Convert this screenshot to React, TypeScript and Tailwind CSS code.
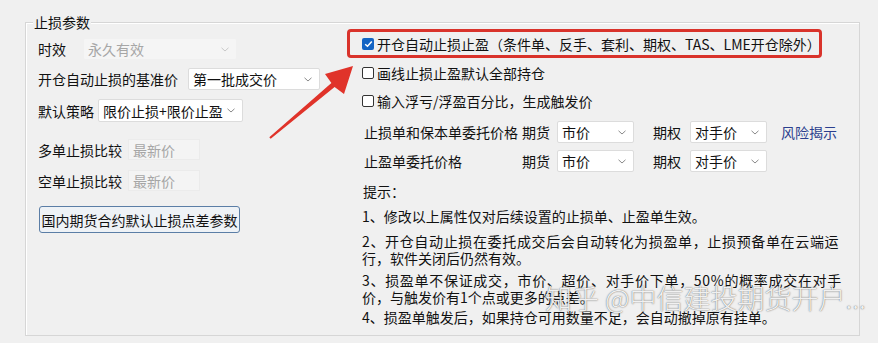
import React from "react";

function Chevron({ color = "#8a8a8a" }: { color?: string }) {
  return (
    <svg width="8" height="5" viewBox="0 0 8 5" className="shrink-0">
      <polyline points="0.5,0.8 4,4 7.5,0.8" fill="none" stroke={color} strokeWidth="1" />
    </svg>
  );
}

function Select({
  w,
  text,
  disabled,
  h = "h-[22px]",
}: {
  w: string;
  text: string;
  disabled?: boolean;
  h?: string;
}) {
  return (
    <div
      className={`${w} ${h} flex items-center justify-between pl-[4px] pr-[7px] rounded-[2px] border ${
        disabled ? "bg-[#f5f5f5] border-[#f0f0f0] text-[#a6a6a6]" : "bg-white border-[#dcdcdc] text-[#111]"
      }`}
    >
      <span className="whitespace-nowrap">{text}</span>
      <Chevron color={disabled ? "#c8c8c8" : "#8a8a8a"} />
    </div>
  );
}

function Box({ checked }: { checked?: boolean }) {
  if (checked) {
    return (
      <div className="w-[12px] h-[12px] rounded-[2px] bg-[#1364c4] flex items-center justify-center shrink-0">
        <svg width="9" height="8" viewBox="0 0 9 8">
          <polyline points="1.2,4.2 3.5,6.3 7.8,1.5" fill="none" stroke="#fff" strokeWidth="1.5" />
        </svg>
      </div>
    );
  }
  return <div className="w-[12px] h-[12px] rounded-[2px] bg-white border border-[#333] shrink-0" />;
}

export default function App() {
  return (
    <div className="relative w-[878px] h-[343px] overflow-hidden bg-[#f0f0f0] text-[14px] leading-[20px] text-[#111] font-['Noto_Sans_CJK_SC','Noto_Sans',sans-serif]">
      <div className="pt-[22px] pl-[25px]">
        <div className="relative w-[835px] h-[314px] border border-[#d6d6d6] shadow-[inset_1px_1px_0_#ffffff]">
          <div className="absolute left-[7px] top-[-11px] px-[1px] bg-[#f0f0f0] leading-[20px]">止损参数</div>
          <div className="flex items-start">
            {/* left column */}
            <div className="w-[321px] shrink-0 pl-[12px] flex flex-col">
              <div className="mt-[15px] h-[22px] flex items-center">
                <span className="w-[45px]">时效</span>
                <Select w="w-[154px]" text="永久有效" disabled />
              </div>
              <div className="mt-[8px] h-[22px] flex items-center">
                <span className="w-[150px] whitespace-nowrap">开仓自动止损的基准价</span>
                <Select w="w-[132px]" text="第一批成交价" />
              </div>
              <div className="mt-[9px] h-[23px] flex items-center">
                <span className="w-[60px] whitespace-nowrap">默认策略</span>
                <Select w="w-[145px]" h="h-[23px]" text="限价止损+限价止盈" />
              </div>
              <div className="mt-[17px] h-[21px] flex items-center">
                <span className="w-[90px] whitespace-nowrap">多单止损比较</span>
                <div className="w-[72px] h-[21px] pl-[4px] flex items-center bg-[#f4f4f4] border border-[#ebebeb] text-[#a6a6a6]">
                  最新价
                </div>
              </div>
              <div className="mt-[10px] h-[21px] flex items-center">
                <span className="w-[90px] whitespace-nowrap">空单止损比较</span>
                <div className="w-[72px] h-[21px] pl-[4px] flex items-center bg-[#f4f4f4] border border-[#ebebeb] text-[#a6a6a6]">
                  最新价
                </div>
              </div>
              <div className="mt-[15px] ml-[1px] w-[201px] h-[27px] flex items-center justify-center rounded-[3px] border border-[#5b7ea6] bg-[#eef2f6] whitespace-nowrap">
                国内期货合约默认止损点差参数
              </div>
            </div>

            {/* right column */}
            <div className="flex flex-col">
              <div className="mt-[6px] w-[475px] h-[29px] border-[3px] border-[#d9332b] rounded-[4px] flex items-center pl-[12px] gap-[3px]">
                <Box checked />
                <span className="whitespace-nowrap">开仓自动止损止盈（条件单、反手、套利、期权、TAS、LME开仓除外）</span>
              </div>
              <div className="mt-[5px] h-[20px] pl-[15px] flex items-center gap-[3px]">
                <Box />
                <span>画线止损止盈默认全部持仓</span>
              </div>
              <div className="mt-[8px] h-[20px] pl-[15px] flex items-center gap-[3px]">
                <Box />
                <span>输入浮亏/浮盈百分比，生成触发价</span>
              </div>
              <div className="mt-[10px] h-[22px] pl-[17px] flex items-center">
                <span className="w-[158px] whitespace-nowrap">止损单和保本单委托价格</span>
                <span className="w-[35px]">期货</span>
                <Select w="w-[77px]" text="市价" />
                <span className="ml-[19px] w-[37px]">期权</span>
                <Select w="w-[77px]" text="对手价" />
                <span className="ml-[14px] text-[#2b3f8e]">风险揭示</span>
              </div>
              <div className="mt-[7px] h-[22px] pl-[17px] flex items-center">
                <span className="w-[158px] whitespace-nowrap">止盈单委托价格</span>
                <span className="w-[35px]">期货</span>
                <Select w="w-[77px]" text="市价" />
                <span className="ml-[19px] w-[37px]">期权</span>
                <Select w="w-[77px]" text="对手价" />
              </div>
              <div className="mt-[9px] pl-[16px] leading-[20px]">提示：</div>
              <div className="pl-[15px] leading-[17px] whitespace-nowrap flex flex-col">
                <div className="mt-[7px]">1、修改以上属性仅对后续设置的止损单、止盈单生效。</div>
                <div className="mt-[8px]">
                  <span className="tracking-[0.65px]">2、开仓自动止损在委托成交后会自动转化为损盈单，止损预备单在云端运</span>
                  <br />
                  行，软件关闭后仍然有效。
                </div>
                <div className="mt-[5px]">
                  <span className="tracking-[0.7px]">3、损盈单不保证成交，市价、超价、对手价下单，50%的概率成交在对手</span>
                  <br />
                  价，与触发价有1个点或更多的点差。
                </div>
                <div className="mt-[3px]">4、损盈单触发后，如果持仓可用数量不足，会自动撤掉原有挂单。</div>
              </div>
            </div>
          </div>
        </div>
      </div>

      {/* red arrow overlay */}
      <svg className="absolute left-0 top-0 pointer-events-none" width="878" height="343">
        <polygon
          points="269.3,137.2 331.4,83.1 325,74 353,66 344,94 334.6,86.9 270.7,138.8"
          fill="#e0332a"
        />
      </svg>

      {/* watermark */}
      <div className="absolute left-[545px] top-[280px] whitespace-nowrap text-[27px] leading-[36px] font-light text-white/90 [text-shadow:0_0_1px_rgba(60,60,60,0.75),0_0_2px_rgba(90,90,90,0.45)] pointer-events-none">
        知乎 @中信建投期货开户...
      </div>
    </div>
  );
}
